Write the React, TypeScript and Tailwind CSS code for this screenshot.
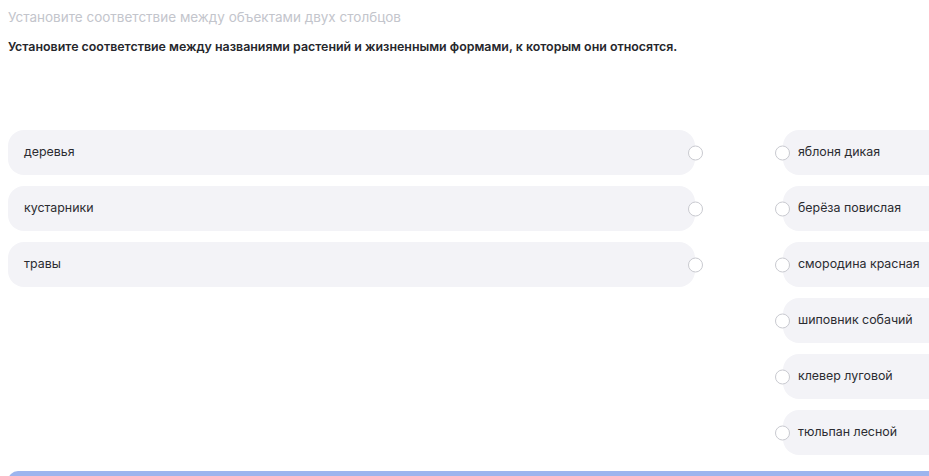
import React from 'react';

const leftItems = ['деревья', 'кустарники', 'травы'];

const rightItems = [
  'яблоня дикая',
  'берёза повислая',
  'смородина красная',
  'шиповник собачий',
  'клевер луговой',
  'тюльпан лесной',
];

const Dot = ({ side }: { side: 'left' | 'right' }) => (
  <span
    className={`absolute top-1/2 h-[15px] w-[15px] -translate-y-1/2 rounded-full border border-[#c9cad0] bg-white ${
      side === 'right' ? 'right-[-8px]' : 'left-[-8px]'
    }`}
  />
);

const MatchingTask = () => {
  return (
    <div className="h-[476px] w-[929px] overflow-hidden bg-white font-['Inter','Liberation_Sans',sans-serif]">
      <div className="pl-2">
        <p className="pt-[8px] text-[13.5px] leading-[18px] text-[#c3c5cc]">
          Установите соответствие между объектами двух столбцов
        </p>
        <p className="mt-[13px] text-[12.4px] leading-[16px] font-semibold text-[#26272c]">
          Установите соответствие между названиями растений и жизненными формами, к которым они относятся.
        </p>

        <div className="mt-[75px] flex gap-[88px]">
          <div className="flex w-[687px] shrink-0 flex-col gap-[11px]">
            {leftItems.map((item) => (
              <div
                key={item}
                className="relative flex h-[45px] items-center rounded-[16px] bg-[#f3f3f7] pl-4 text-[12.4px] text-[#2b2c31]"
              >
                {item}
                <Dot side="right" />
              </div>
            ))}
          </div>

          <div className="flex w-[200px] shrink-0 flex-col gap-[11px]">
            {rightItems.map((item) => (
              <div
                key={item}
                className="relative flex h-[45px] items-center rounded-[16px] bg-[#f3f3f7] pl-[15px] text-[12.4px] text-[#2b2c31]"
              >
                {item}
                <Dot side="left" />
              </div>
            ))}
          </div>
        </div>

        <div className="mt-[16px] h-[20px] rounded-tl-[10px] bg-[#9db5ee]" />
      </div>
    </div>
  );
};

export default MatchingTask;
